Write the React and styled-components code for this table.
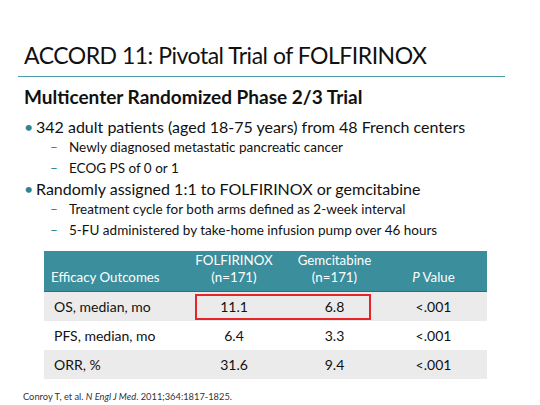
import styled, { createGlobalStyle } from "styled-components";

const Global = createGlobalStyle`
  html, body { margin: 0; padding: 0; background: #fff; }
  body { font-family: Lato, "Open Sans", sans-serif; color: #111; }
`;

const Slide = styled.div`
  width: 540px;
  height: 405px;
  box-sizing: border-box;
  padding-top: 40px;
  overflow: hidden;
`;

const Title = styled.h1`
  margin: 0 0 0 24px;
  font-weight: 400;
  font-size: 23px;
  line-height: 30px;
  letter-spacing: -0.5px;
  white-space: nowrap;
`;

const Rule = styled.div`
  margin: 6px 35px 0 18px;
  height: 1px;
  background: #4a9bac;
`;

const Subtitle = styled.h2`
  margin: 9px 0 0 24px;
  font-weight: 700;
  font-size: 19px;
  line-height: 22px;
  white-space: nowrap;
`;

const List = styled.ul`
  list-style: none;
  margin: 8px 0 0 0;
  padding: 0 0 0 24px;
`;

const Bullet = styled.li`
  display: flex;
  font-size: 16px;
  line-height: 21px;
  white-space: nowrap;
  &::before {
    content: "•";
    color: #2b8595;
    width: 12px;
    flex: none;
  }
`;

const SubList = styled.ul`
  list-style: none;
  margin: 0;
  padding: 0 0 0 26px;
`;

const SubItem = styled.li`
  display: flex;
  font-size: 13.5px;
  line-height: 20.5px;
  white-space: nowrap;
  &::before {
    content: "–";
    color: #2b8595;
    width: 19px;
    flex: none;
  }
`;

const Table = styled.div`
  margin: 11px 0 0 44px;
  width: 443px;
  display: grid;
  grid-template-columns: 140px 100px 101px 102px;
`;

const HeadCell = styled.div`
  background: #3b8e9c;
  color: #fff;
  font-size: 13.3px;
  line-height: 16.5px;
  height: 41px;
  box-sizing: border-box;
  padding: 0 ${(p) => (p.pr ? "5px" : "0")} 6px ${(p) => (p.left ? "7px" : "0")};
  display: flex;
  align-items: flex-end;
  justify-content: ${(p) => (p.left ? "flex-start" : "center")};
  text-align: ${(p) => (p.left ? "left" : "center")};
  border-bottom: 1px solid #2c6f79;
`;

const Cell = styled.div`
  background: ${(p) => (p.shade ? "#ebebeb" : "#fff")};
  height: 29px;
  box-sizing: border-box;
  display: flex;
  align-items: center;
  justify-content: ${(p) => (p.left ? "flex-start" : "center")};
  padding: 0 ${(p) => (p.pr ? "5px" : "0")} 0 ${(p) => (p.left ? "10px" : "0")};
  font-size: 14px;
  position: relative;
`;

const Highlight = styled.div`
  position: absolute;
  z-index: 1;
  top: 2px;
  left: 11px;
  width: 176px;
  height: 26px;
  border: 2px solid #e5252a;
  box-sizing: border-box;
  pointer-events: none;
`;

const Cite = styled.div`
  margin: 12px 0 0 23px;
  font-size: 9.3px;
  line-height: 11px;
  color: #333;
  white-space: nowrap;
`;

const rows = [
  ["OS, median, mo", "11.1", "6.8", "<.001", true],
  ["PFS, median, mo", "6.4", "3.3", "<.001", false],
  ["ORR, %", "31.6", "9.4", "<.001", true],
];

export default function App() {
  return (
    <Slide>
      <Global />
      <Title>ACCORD 11: Pivotal Trial of FOLFIRINOX</Title>
      <Rule />
      <Subtitle>Multicenter Randomized Phase 2/3 Trial</Subtitle>
      <List>
        <Bullet>342 adult patients (aged 18-75 years) from 48 French centers</Bullet>
        <SubList>
          <SubItem>Newly diagnosed metastatic pancreatic cancer</SubItem>
          <SubItem>ECOG PS of 0 or 1</SubItem>
        </SubList>
        <Bullet>Randomly assigned 1:1 to FOLFIRINOX or gemcitabine</Bullet>
        <SubList>
          <SubItem>Treatment cycle for both arms defined as 2-week interval</SubItem>
          <SubItem>5-FU administered by take-home infusion pump over 46 hours</SubItem>
        </SubList>
      </List>
      <Table>
        <HeadCell left>Efficacy Outcomes</HeadCell>
        <HeadCell>FOLFIRINOX<br />(n=171)</HeadCell>
        <HeadCell>Gemcitabine<br />(n=171)</HeadCell>
        <HeadCell pr><span><i>P</i> Value</span></HeadCell>
        {rows.map(([label, a, b, p, shade], i) => [
          <Cell key={`l${i}`} left shade={shade}>{label}</Cell>,
          <Cell key={`a${i}`} shade={shade}>
            {a}
            {i === 0 && <Highlight />}
          </Cell>,
          <Cell key={`b${i}`} shade={shade}>{b}</Cell>,
          <Cell key={`p${i}`} pr shade={shade}>{p}</Cell>,
        ])}
      </Table>
      <Cite>
        Conroy T, et al. <i>N Engl J Med</i>. 2011;364:1817-1825.
      </Cite>
    </Slide>
  );
}
